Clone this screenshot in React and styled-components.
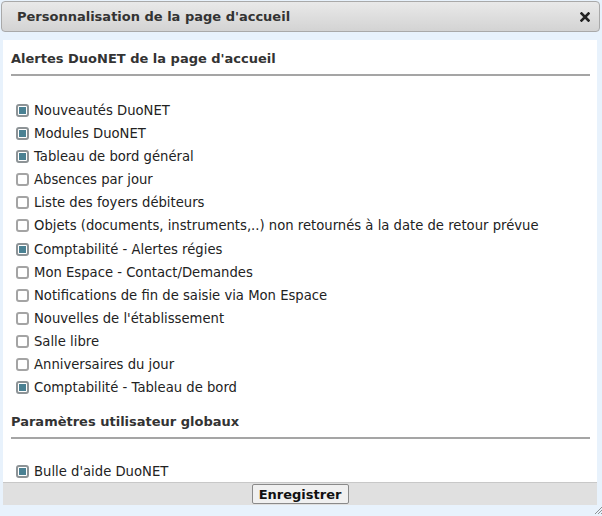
import React, { useState } from "react";
import styled, { createGlobalStyle } from "styled-components";

const GlobalStyle = createGlobalStyle`
  html, body {
    margin: 0;
    padding: 0;
    background: #e8f2fc;
  }
  body {
    font-family: "DejaVu Sans", Verdana, sans-serif;
    font-size: 13px;
    color: #222;
  }
`;

const alertes = [
  ["Nouveautés DuoNET", true],
  ["Modules DuoNET", true],
  ["Tableau de bord général", true],
  ["Absences par jour", false],
  ["Liste des foyers débiteurs", false],
  ["Objets (documents, instruments,..) non retournés à la date de retour prévue", false],
  ["Comptabilité - Alertes régies", true],
  ["Mon Espace - Contact/Demandes", false],
  ["Notifications de fin de saisie via Mon Espace", false],
  ["Nouvelles de l'établissement", false],
  ["Salle libre", false],
  ["Anniversaires du jour", false],
  ["Comptabilité - Tableau de bord", true],
];

function Check({ label, initial }) {
  const [on, setOn] = useState(initial);
  return (
    <Row onClick={() => setOn((v) => !v)}>
      <Box $on={on} />
      <span>{label}</span>
    </Row>
  );
}

export default function App() {
  return (
    <Dialog>
      <GlobalStyle />
      <TitleBar>
        <Title>Personnalisation de la page d'accueil</Title>
        <Close aria-label="Fermer">
          <svg width="10" height="10" viewBox="0 0 10 10">
            <path d="M1.5 1.5 L8.5 8.5 M8.5 1.5 L1.5 8.5" stroke="#222" strokeWidth="2.6" strokeLinecap="square" />
          </svg>
        </Close>
      </TitleBar>

      <Content>
        <Section>
          <Heading>Alertes DuoNET de la page d'accueil</Heading>
          <List $top={23} $bottom={4}>
            {alertes.map(([label, on]) => (
              <Check key={label} label={label} initial={on} />
            ))}
          </List>
        </Section>
        <Section>
          <Heading>Paramètres utilisateur globaux</Heading>
          <List $top={21}>
            <Check label="Bulle d'aide DuoNET" initial={true} />
          </List>
        </Section>
      </Content>

      <Footer>
        <SaveButton type="button">Enregistrer</SaveButton>
      </Footer>
      <Grip>
        <svg width="7" height="7" viewBox="0 0 7 7">
          <path d="M0 7 L7 0 M3 7 L7 3 M6 7 L7 6" stroke="#777" strokeWidth="0.8" />
        </svg>
      </Grip>
    </Dialog>
  );
}

/* ========== styles ========== */

const Dialog = styled.div`
  position: relative;
  width: 602px;
  height: 516px;
  padding: 1px 2px 0 1px;
  box-sizing: border-box;
  display: flex;
  flex-direction: column;
  background: #e8f2fc;
`;

const TitleBar = styled.div`
  height: 31px;
  box-sizing: border-box;
  display: flex;
  align-items: center;
  justify-content: space-between;
  padding: 0 9px 0 15px;
  border: 1px solid #a9a9a9;
  border-radius: 4px;
  background: linear-gradient(#e9e9e9, #d3d3d3);
`;

const Title = styled.span`
  font-weight: bold;
  font-size: 13px;
  color: #333;
`;

const Close = styled.span`
  display: flex;
  align-items: center;
  width: 10px;
  height: 10px;
`;

const Content = styled.div`
  margin: 8px 3px 0 2px;
  height: 442px;
  background: #fff;
  padding: 0 8px;
  display: flex;
  flex-direction: column;
  overflow: hidden;
`;

const Section = styled.section`
  display: flex;
  flex-direction: column;
`;

const Heading = styled.h3`
  margin: 0;
  padding: 11px 0 8px;
  line-height: 15px;
  font-size: 13px;
  font-weight: bold;
  color: #333;
  border-bottom: 2px solid #a5a5a5;
  width: 579px;
`;

const List = styled.div`
  padding: ${(p) => p.$top ?? 22}px 0 ${(p) => p.$bottom ?? 0}px 5px;
  display: flex;
  flex-direction: column;
`;

const Row = styled.label`
  display: flex;
  align-items: center;
  gap: 5px;
  height: 23.08px;
  font-size: 13.2px;
  color: #222;
  cursor: pointer;
  user-select: none;
`;

const Box = styled.span`
  width: 13px;
  height: 13px;
  box-sizing: border-box;
  border: 2px solid ${(p) => (p.$on ? "#8d9396" : "#a4a4a4")};
  border-radius: 3px;
  background: #fff;
  padding: 1px;
  display: flex;

  &::after {
    content: "";
    flex: 1;
    background: ${(p) => (p.$on ? "#4a8193" : "transparent")};
  }
`;

const Footer = styled.div`
  margin: 0 3px 0 2px;
  height: 23px;
  box-sizing: border-box;
  background: #e0e0e0;
  border-top: 1px solid #c8c8c8;
  display: flex;
  justify-content: center;
  align-items: center;
`;

const SaveButton = styled.button`
  font-family: "DejaVu Sans", Verdana, sans-serif;
  font-weight: bold;
  font-size: 13px;
  color: #111;
  background: #f0f0f0;
  border: 1px solid #8a8a8a;
  border-radius: 2px;
  height: 20px;
  width: 97px;
  padding: 0;
  cursor: pointer;
`;

const Grip = styled.div`
  position: absolute;
  right: 0;
  bottom: 2px;
  width: 7px;
  height: 7px;
  display: flex;
`;
